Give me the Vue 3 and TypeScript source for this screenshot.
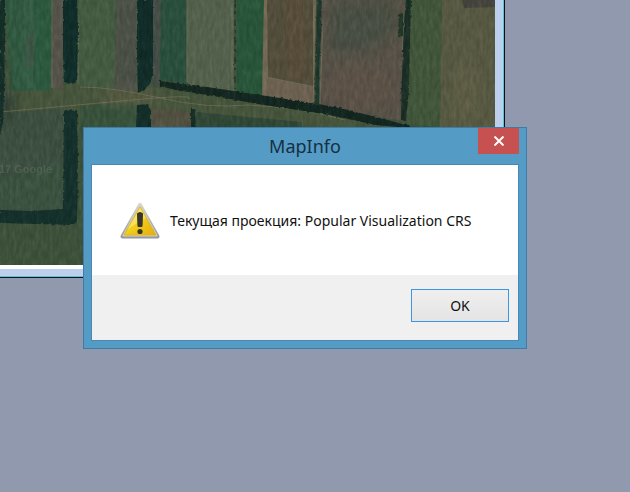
<script setup lang="ts">
import { ref } from 'vue'

interface Shape {
  points: string
  fill: string
}

const message = 'Текущая проекция: Popular Visualization CRS'
const open = ref(true)

const close = () => {
  open.value = false
}

const fields: Shape[] = [
  { points: '5,0 53,0 52,90 12,91', fill: '#2f563f' },
  { points: '24,0 34,0 33,88 22,88', fill: '#335a42' },
  { points: '38,0 50,0 50,89 36,89', fill: '#2b583d' },
  { points: '26,36 34,32 34,66 27,68', fill: '#3c5444' },
  { points: '53,0 63,0 63,88 51,88', fill: '#545149' },
  { points: '78,0 116,0 116,90 78,86', fill: '#43593f' },
  { points: '116,0 137,0 137,92 114,90', fill: '#4a4f46' },
  { points: '53,88 63,88 63,92 53,92', fill: '#4a5240' },
  { points: '153,0 161,0 160,84 153,88', fill: '#434b45' },
  { points: '161,0 186,0 186,84 160,80', fill: '#294d3b' },
  { points: '187,0 234,0 234,92 187,84', fill: '#52604b' },
  { points: '237,0 264,0 263,97 237,92', fill: '#275438' },
  { points: '264,0 316,0 314,105 262,97', fill: '#716752' },
  { points: '267,0 313,0 313,86 268,77', fill: '#514c39' },
  { points: '284,0 304,0 306,80 288,78', fill: '#564b38' },
  { points: '268,78 313,87 313,104 266,96', fill: '#6b6050' },
  { points: '321,0 405,0 402,121 320,106', fill: '#565046' },
  { points: '410,0 442,0 440,127 408,124', fill: '#3f5439' },
  { points: '442,0 495,0 495,127 440,127', fill: '#555740' },
  { points: '462,0 495,0 495,7 464,8', fill: '#44433b' },
  { points: '0,114 63,108 63,210 0,210', fill: '#3b4d3e' },
  { points: '0,176 63,166 63,209 0,209', fill: '#38503d' },
  { points: '80,106 136,102 136,128 80,128', fill: '#37503a' },
  { points: '152,108 191,112 191,128 151,128', fill: '#504f40' },
  { points: '196,112 302,122 302,128 196,128', fill: '#304635' },
]

const trees: Shape[] = [
  { points: '0,0 5,0 5,40 4,92 3,122 0,136', fill: '#142d27' },
  { points: '63,0 77,0 78,30 77,81 72,84 64,82 63,50', fill: '#102c28' },
  { points: '137,0 153,0 153,72 150,84 144,90 138,93 137,60', fill: '#112b27' },
  { points: '64,111 77,110 78,160 77,222 72,225 0,223 0,210 32,211 63,209', fill: '#142f2a' },
  { points: '137,105 148,104 151,112 151,128 136,128', fill: '#132c27' },
  { points: '191,109 195,109 196,128 191,128', fill: '#162f26' },
  { points: '160,81 176,83 214,88 260,95 300,101 340,108 372,116 410,126 410,128 376,125 330,115 258,104 214,96 176,90 160,86', fill: '#13251f' },
  { points: '317,0 322,0 321,34 319,70 319,106 315,105 316,50', fill: '#1f352c' },
  { points: '406,0 411,0 410,40 409,88 406,121 401,120 402,72 404,26', fill: '#1a2d24' },
  { points: '399,14 403,13 403,36 398,37', fill: '#1e3526' },
]

const tracks: string[] = [
  'M52 0 52 88',
  'M78 28 78 84',
  'M187 0 187 82',
  'M232 8 232 86',
  'M323 20 320 104',
  'M403 18 402 119',
  'M80 87Q112 87 160 98T248 105Q300 107 345 120',
  'M0 112Q66 106 132 100T188 99',
]
</script>

<template>
  <main class="workspace">
    <section class="map-window" aria-label="Карта">
      <svg class="map" viewBox="0 0 495 265" preserveAspectRatio="xMinYMin slice" aria-hidden="true">
        <defs>
          <filter id="grain" x="0" y="0" width="100%" height="100%" color-interpolation-filters="sRGB">
            <feTurbulence type="fractalNoise" baseFrequency="0.3 0.1" numOctaves="3" seed="4" />
            <feColorMatrix values="1 0 0 0 0.05  1 0 0 0 0.05  1 0 0 0 0.05  0 0 0 0 1" />
          </filter>
          <filter id="rough" x="-5%" y="-5%" width="110%" height="110%" color-interpolation-filters="sRGB">
            <feTurbulence type="fractalNoise" baseFrequency="0.3" numOctaves="2" seed="9" result="n" />
            <feDisplacementMap in="SourceGraphic" in2="n" scale="3" xChannelSelector="R" yChannelSelector="G" />
          </filter>
          <filter id="cloud" x="-30%" y="-30%" width="160%" height="160%" color-interpolation-filters="sRGB">
            <feGaussianBlur stdDeviation="6" />
          </filter>
        </defs>
        <rect width="495" height="265" fill="#3c5039" />
        <path d="M0 90 80 84 160 88 260 104 400 128H0Z" fill="#45533b" />
        <polygon v-for="f in fields" :key="f.points" :points="f.points" :fill="f.fill" />
        <g filter="url(#cloud)">
          <path d="M330 2H396L392 36 366 52 328 54Z" fill="#424b40" opacity="0.7" />
          <ellipse cx="360" cy="88" rx="35" ry="22" fill="#5d5046" opacity="0.7" />
          <ellipse cx="7" cy="105" rx="7" ry="14" fill="#2c3a33" />
          <ellipse cx="130" cy="97" rx="30" ry="6" fill="#6a6249" opacity="0.6" />
          <ellipse cx="465" cy="90" rx="14" ry="32" fill="#625f47" opacity="0.5" />
        </g>
        <path v-for="t in tracks" :key="t" :d="t" class="track" />
        <g filter="url(#rough)">
          <polygon v-for="t in trees" :key="t.points" :points="t.points" :fill="t.fill" />
          <path d="M235 0V88" stroke="#243b2d" stroke-width="2" stroke-dasharray="7 4 3 5" />
        </g>
        <rect class="grain" width="495" height="265" filter="url(#grain)" />
        <text x="-1" y="173" class="watermark">17 Google</text>
      </svg>
    </section>

    <div v-if="open" class="dialog" role="alertdialog" aria-labelledby="dialog-title" aria-describedby="dialog-text">
      <header class="titlebar">
        <h1 id="dialog-title">MapInfo</h1>
        <button class="close" type="button" aria-label="Закрыть" @click="close">
          <svg width="12" height="10" viewBox="0 0 12 10" aria-hidden="true">
            <path d="M1.5 .5 10.5 9.5M10.5 .5 1.5 9.5" stroke="#fff" stroke-width="2" />
          </svg>
        </button>
      </header>
      <div class="client">
        <div class="content">
          <svg class="warning" width="42" height="38" viewBox="0 0 42 38" aria-hidden="true">
            <defs>
              <linearGradient id="gold" x1="0" y1="0" x2="1" y2="1">
                <stop offset="0" stop-color="#fff27a" />
                <stop offset=".45" stop-color="#f3d11c" />
                <stop offset="1" stop-color="#e6ac0c" />
              </linearGradient>
              <linearGradient id="rim" x1="0" y1="0" x2="0" y2="1">
                <stop offset="0" stop-color="#d4d4d0" />
                <stop offset="1" stop-color="#96989c" />
              </linearGradient>
            </defs>
            <path d="M21 3 38.500 34.500H3.500Z" fill="url(#rim)" stroke="url(#rim)" stroke-width="4" stroke-linejoin="round" />
            <path d="M21 4 37.500 33.500H4.500Z" fill="#d5d0b8" stroke="#d5d0b8" stroke-width="2" stroke-linejoin="round" />
            <path d="M21 5 37 33H5Z" fill="url(#gold)" stroke="#d9b523" stroke-linejoin="round" />
            <path d="M21 5.500 27 16Q17 21 8.500 27.500Z" fill="#fff6a0" opacity=".45" />
            <path d="M18.500 11.500Q21 9.500 23.500 11.500L23 24.500H19Z" fill="#38362c" stroke="#38362c" stroke-linejoin="round" />
            <circle cx="21" cy="29.500" r="2.600" fill="#38362c" />
          </svg>
          <p id="dialog-text">{{ message }}</p>
        </div>
        <footer class="actions">
          <button class="ok" type="button" @click="close">OK</button>
        </footer>
      </div>
    </div>
  </main>
</template>

<style>
body {
  margin: 0;
  background: #9199af;
}
</style>

<style scoped>
.workspace {
  position: relative;
  min-height: 100vh;
  overflow: hidden;
  background: #9199af;
  font-family: 'Noto Sans', 'Open Sans', sans-serif;
  color: #111;
}

.map-window {
  position: absolute;
  top: 0;
  left: 0;
  box-sizing: border-box;
  width: calc(80% - 1px);
  padding-bottom: 4px;
  background: #fff;
  border: solid #bcd0ee;
  border-width: 0 8px 7px 0;
  box-shadow: 0 0 0 1px #58c4d4, 0 0 0 2px #0a1018;
}

.map {
  display: block;
  width: 100%;
  height: 265px;
}

.track {
  fill: none;
  stroke: #7a745c;
  stroke-width: 1;
  opacity: 0.6;
}

.grain {
  mix-blend-mode: soft-light;
  opacity: 0.22;
}

.watermark {
  font: bold 11px 'Liberation Sans', sans-serif;
  fill: #718072;
  opacity: 0.35;
}

.dialog {
  position: absolute;
  top: 127px;
  left: 83px;
  box-sizing: border-box;
  width: 444px;
  padding: 0 7px 7px;
  border: 1px solid #3d7ca5;
  background: #549bc6;
}

.titlebar {
  position: relative;
  height: 36px;
}

h1 {
  margin: 0;
  font-size: 18px;
  font-weight: 400;
  line-height: 36px;
  text-align: center;
  color: #17303f;
}

.close {
  position: absolute;
  top: 0;
  right: 0;
  display: grid;
  place-items: center;
  width: 41px;
  height: 26px;
  padding: 0;
  border: 0;
  background: #c75050;
}

.client {
  border: 1px solid #4689b2;
  background: #fff;
}

.content {
  display: flex;
  box-sizing: border-box;
  align-items: center;
  gap: 9px;
  height: 110px;
  padding: 2px 0 0 27px;
}

p {
  margin: 0;
  font-size: 14px;
  line-height: 20px;
  white-space: nowrap;
}

.actions {
  display: flex;
  justify-content: flex-end;
  padding: 14px 9px 18px;
  background: #f0f0f0;
}

.ok {
  width: 98px;
  height: 33px;
  padding: 0;
  border: 1px solid #3c96e4;
  background: linear-gradient(#efefef, #e4e4e4);
  color: #111;
  font: 14px 'Noto Sans', 'Open Sans', sans-serif;
}
</style>
